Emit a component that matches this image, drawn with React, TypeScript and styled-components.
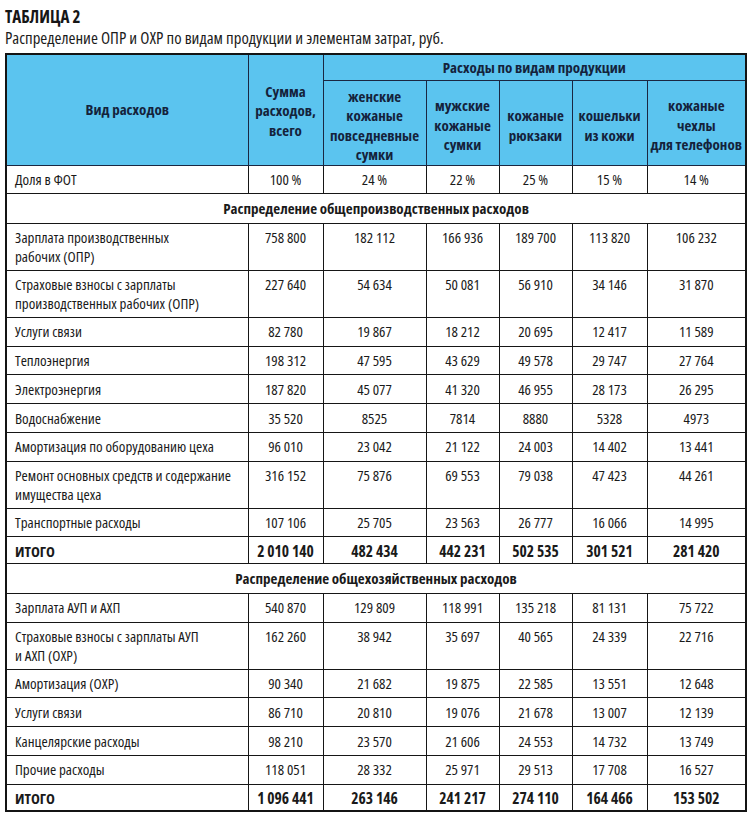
import React from "react";
import styled, { createGlobalStyle } from "styled-components";

const GlobalStyle = createGlobalStyle`
  html, body { margin: 0; padding: 0; background: #ffffff; }
  body {
    font-family: "Open Sans", "Liberation Sans", sans-serif;
    font-stretch: 75%;
    color: #1a1a1a;
  }
`;

const Page = styled.div`
  width: 740px;
  padding: 7px 5px 0 5px;
`;

const Title = styled.div`
  font-size: 17px;
  font-weight: 700;
  line-height: 20px;
  color: #161616;
`;

const Subtitle = styled.div`
  font-size: 16.8px;
  line-height: 22px;
  margin-bottom: 4px;
  color: #1c1c1c;
`;

const Table = styled.table`
  width: 740px;
  table-layout: fixed;
  border-collapse: collapse;
  border: 2.5px solid #141414;
`;

const Col = styled.col<{ w: number }>`
  width: ${(p) => p.w}px;
`;

const HeadRow = styled.tr<{ h: number }>`
  height: ${(p) => p.h}px;
`;

const HeadCell = styled.th<{ pt?: number }>`
  background: #5bc4ef;
  color: #14223b;
  font-weight: 700;
  font-size: 15px;
  line-height: 19.5px;
  text-align: center;
  vertical-align: middle;
  border: 1px solid #1a2742;
  padding: ${(p) => p.pt ?? 0}px 2px 0 2px;
`;

type Kind = "single" | "double" | "section" | "total";

const rowHeights: Record<Kind, number> = {
  single: 28.75,
  double: 47,
  section: 29.5,
  total: 27,
};

const BodyRow = styled.tr<{ kind: Kind }>`
  height: ${(p) => rowHeights[p.kind]}px;
`;

const LabelCell = styled.td<{ bold?: boolean }>`
  border: 1px solid #161616;
  padding: 4.5px 6px 0 8px;
  vertical-align: top;
  text-align: left;
  font-size: 15px;
  line-height: 18.5px;
  font-weight: ${(p) => (p.bold ? 700 : 400)};
  color: #1a1a1a;
`;

const NumCell = styled.td<{ bold?: boolean }>`
  border: 1px solid #161616;
  padding: 4.5px 2px 0 2px;
  vertical-align: top;
  text-align: center;
  font-size: ${(p) => (p.bold ? 15.5 : 15)}px;
  line-height: 18.5px;
  font-weight: ${(p) => (p.bold ? 700 : 400)};
  color: #1a1a1a;
`;

const SectionCell = styled.td`
  border: 1px solid #161616;
  padding: 0;
  vertical-align: middle;
  text-align: center;
  font-size: 15px;
  line-height: 18.5px;
  font-weight: 700;
  color: #1a1a1a;
`;

type DataRow = { label: string; values: string[]; kind: Kind };

const widths = [242, 75, 103, 73, 73, 75, 99];

const productHeads = [
  "женские\nкожаные\nповседневные\nсумки",
  "мужские\nкожаные\nсумки",
  "кожаные\nрюкзаки",
  "кошельки\nиз кожи",
  "кожаные\nчехлы\nдля телефонов",
];

const production: DataRow[] = [
  { label: "Зарплата производственных\nрабочих (ОПР)", values: ["758 800", "182 112", "166 936", "189 700", "113 820", "106 232"], kind: "double" },
  { label: "Страховые взносы с зарплаты\nпроизводственных рабочих (ОПР)", values: ["227 640", "54 634", "50 081", "56 910", "34 146", "31 870"], kind: "double" },
  { label: "Услуги связи", values: ["82 780", "19 867", "18 212", "20 695", "12 417", "11 589"], kind: "single" },
  { label: "Теплоэнергия", values: ["198 312", "47 595", "43 629", "49 578", "29 747", "27 764"], kind: "single" },
  { label: "Электроэнергия", values: ["187 820", "45 077", "41 320", "46 955", "28 173", "26 295"], kind: "single" },
  { label: "Водоснабжение", values: ["35 520", "8525", "7814", "8880", "5328", "4973"], kind: "single" },
  { label: "Амортизация по оборудованию цеха", values: ["96 010", "23 042", "21 122", "24 003", "14 402", "13 441"], kind: "single" },
  { label: "Ремонт основных средств и содержание\nимущества цеха", values: ["316 152", "75 876", "69 553", "79 038", "47 423", "44 261"], kind: "double" },
  { label: "Транспортные расходы", values: ["107 106", "25 705", "23 563", "26 777", "16 066", "14 995"], kind: "single" },
  { label: "ИТОГО", values: ["2 010 140", "482 434", "442 231", "502 535", "301 521", "281 420"], kind: "total" },
];

const general: DataRow[] = [
  { label: "Зарплата АУП и АХП", values: ["540 870", "129 809", "118 991", "135 218", "81 131", "75 722"], kind: "single" },
  { label: "Страховые взносы с зарплаты АУП\nи АХП (ОХР)", values: ["162 260", "38 942", "35 697", "40 565", "24 339", "22 716"], kind: "double" },
  { label: "Амортизация (ОХР)", values: ["90 340", "21 682", "19 875", "22 585", "13 551", "12 648"], kind: "single" },
  { label: "Услуги связи", values: ["86 710", "20 810", "19 076", "21 678", "13 007", "12 139"], kind: "single" },
  { label: "Канцелярские расходы", values: ["98 210", "23 570", "21 606", "24 553", "14 732", "13 749"], kind: "single" },
  { label: "Прочие расходы", values: ["118 051", "28 332", "25 971", "29 513", "17 708", "16 527"], kind: "single" },
  { label: "ИТОГО", values: ["1 096 441", "263 146", "241 217", "274 110", "164 466", "153 502"], kind: "total" },
];

const Lines = ({ text }: { text: string }) => (
  <>
    {text.split("\n").map((t, i) => (
      <React.Fragment key={i}>
        {i > 0 && <br />}
        {t}
      </React.Fragment>
    ))}
  </>
);

const Rows = ({ rows }: { rows: DataRow[] }) => (
  <>
    {rows.map((r, i) => {
      const bold = r.kind === "total";
      return (
        <BodyRow key={i} kind={r.kind}>
          <LabelCell bold={bold}>
            <Lines text={r.label} />
          </LabelCell>
          {r.values.map((v, j) => (
            <NumCell key={j} bold={bold}>
              {v}
            </NumCell>
          ))}
        </BodyRow>
      );
    })}
  </>
);

export default function App() {
  return (
    <>
      <GlobalStyle />
      <Page>
        <Title>ТАБЛИЦА 2</Title>
        <Subtitle>Распределение ОПР и ОХР по видам продукции и элементам затрат, руб.</Subtitle>
        <Table>
          <colgroup>
            {widths.map((w, i) => (
              <Col key={i} w={w} />
            ))}
          </colgroup>
          <thead>
            <HeadRow h={26}>
              <HeadCell rowSpan={2}>Вид расходов</HeadCell>
              <HeadCell rowSpan={2} pt={2}>
                <Lines text={"Сумма\nрасходов,\nвсего"} />
              </HeadCell>
              <HeadCell colSpan={5}>Расходы по видам продукции</HeadCell>
            </HeadRow>
            <HeadRow h={83}>
              {productHeads.map((h, i) => (
                <HeadCell key={i} pt={6}>
                  <Lines text={h} />
                </HeadCell>
              ))}
            </HeadRow>
          </thead>
          <tbody>
            <BodyRow kind="single">
              <LabelCell>Доля в ФОТ</LabelCell>
              {["100 %", "24 %", "22 %", "25 %", "15 %", "14 %"].map((v, i) => (
                <NumCell key={i}>{v}</NumCell>
              ))}
            </BodyRow>
            <BodyRow kind="section">
              <SectionCell colSpan={7}>Распределение общепроизводственных расходов</SectionCell>
            </BodyRow>
            <Rows rows={production} />
            <BodyRow kind="section">
              <SectionCell colSpan={7}>Распределение общехозяйственных расходов</SectionCell>
            </BodyRow>
            <Rows rows={general} />
          </tbody>
        </Table>
      </Page>
    </>
  );
}
